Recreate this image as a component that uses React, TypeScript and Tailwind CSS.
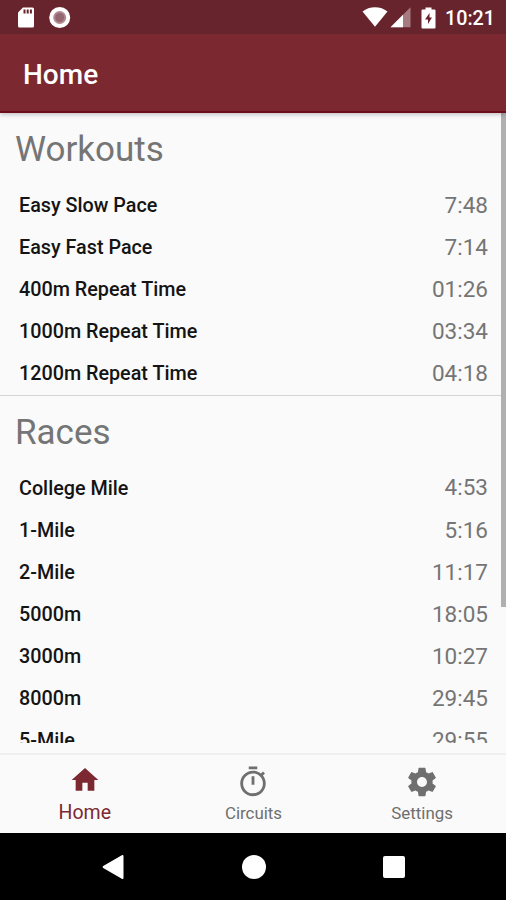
import React, { useState } from 'react';

const workouts = [
  { name: 'Easy Slow Pace', time: '7:48' },
  { name: 'Easy Fast Pace', time: '7:14' },
  { name: '400m Repeat Time', time: '01:26' },
  { name: '1000m Repeat Time', time: '03:34' },
  { name: '1200m Repeat Time', time: '04:18' },
];

const races = [
  { name: 'College Mile', time: '4:53' },
  { name: '1-Mile', time: '5:16' },
  { name: '2-Mile', time: '11:17' },
  { name: '5000m', time: '18:05' },
  { name: '3000m', time: '10:27' },
  { name: '8000m', time: '29:45' },
  { name: '5-Mile', time: '29:55' },
];

const tabs = [
  { name: 'Home', path: 'M10 20v-6h4v6h5v-8h3L12 3 2 12h3v8z' },
  {
    name: 'Circuits',
    path: 'M15 1H9v2h6V1zm-4 13h2V8h-2v6zm8.03-6.61l1.42-1.42c-.43-.51-.9-.99-1.41-1.41l-1.42 1.42C16.07 4.74 14.12 4 12 4c-4.97 0-9 4.03-9 9s4.02 9 9 9 9-4.03 9-9c0-2.12-.74-4.07-1.97-5.61zM12 20c-3.87 0-7-3.13-7-7s3.13-7 7-7 7 3.13 7 7-3.13 7-7 7z',
  },
  {
    name: 'Settings',
    path: 'M19.43 12.98c.04-.32.07-.64.07-.98s-.03-.66-.07-.98l2.11-1.65c.19-.15.24-.42.12-.64l-2-3.46c-.12-.22-.39-.3-.61-.22l-2.49 1c-.52-.4-1.08-.73-1.69-.98l-.38-2.65C14.46 2.18 14.25 2 14 2h-4c-.25 0-.46.18-.49.42l-.38 2.65c-.61.25-1.17.59-1.69.98l-2.49-1c-.23-.09-.49 0-.61.22l-2 3.46c-.13.22-.07.49.12.64l2.11 1.65c-.04.32-.07.65-.07.98s.03.66.07.98l-2.11 1.65c-.19.15-.24.42-.12.64l2 3.46c.12.22.39.3.61.22l2.49-1c.52.4 1.08.73 1.69.98l.38 2.65c.03.24.24.42.49.42h4c.25 0 .46-.18.49-.42l.38-2.65c.61-.25 1.17-.59 1.69-.98l2.49 1c.23.09.49 0 .61-.22l2-3.46c.12-.22.07-.49-.12-.64l-2.11-1.65zM12 15.5c-1.93 0-3.5-1.57-3.5-3.5s1.57-3.5 3.5-3.5 3.5 1.57 3.5 3.5-1.57 3.5-3.5 3.5z',
  },
];

const StatusBar = () => (
  <div className="h-[34px] shrink-0 bg-[#68242d] flex items-center justify-between pt-px pl-[17px] pr-[11px] text-white">
    <div className="flex items-center gap-[14px]">
      <svg width="18" height="22" viewBox="0 0 18 22">
        <path d="M6 .5h9.5A1.500 1.500 0 0 1 17 2v17a1.500 1.500 0 0 1-1.500 1.500h-13A1.500 1.500 0 0 1 1 19V5.500z" fill="#fff" />
        <path d="M6.500 2.500h2v4h-2zM9.700 2.500h2v4h-2zM12.900 2.500h2v4h-2z" fill="#68242d" />
      </svg>
      <svg width="22" height="22" viewBox="0 0 22 22">
        <circle cx="10.700" cy="10.500" r="10.500" fill="#fff" />
        <circle cx="10.700" cy="10.500" r="6.500" fill="#b08a90" />
        <circle cx="10.700" cy="10.500" r="4.500" fill="#946670" />
      </svg>
    </div>
    <div className="flex items-center">
      <svg width="26" height="21" viewBox="0 0 26 21">
        <path d="M13 19.700L.5 4.600C4 1.700 8.300.2 13 .2s9 1.500 12.500 4.400z" fill="#fff" />
      </svg>
      <svg className="ml-[2px]" width="21" height="21" viewBox="0 0 21 21">
        <path d="M20.500.2v20H.5z" fill="#a57a80" />
        <path d="M13 7.700v12.500H.5z" fill="#fff" />
      </svg>
      <svg className="ml-[10px]" width="15" height="22" viewBox="0 0 15 22">
        <path d="M4.500.5h6v2h3a1 1 0 0 1 1 1v17a1 1 0 0 1-1 1h-12a1 1 0 0 1-1-1v-17a1 1 0 0 1 1-1h3z" fill="#fff" />
        <path d="M8.500 6L4 12.500h3V17l4-6.500H8.500z" fill="#68242d" />
      </svg>
      <span className="ml-[9px] pt-[2px] text-[19.7px] font-medium leading-none">10:21</span>
    </div>
  </div>
);

const Section = ({ title, items }: { title: string; items: { name: string; time: string }[] }) => (
  <section>
    <h2 className="h-[71px] pt-[4px] pl-[15px] flex items-center text-[35px] text-[#757575]">{title}</h2>
    {items.map(item => (
      <div key={item.name} className="h-[42.17px] pt-px pl-[19px] pr-[18px] flex items-center justify-between">
        <span className="text-[19.75px] font-medium text-[#141414]">{item.name}</span>
        <span className="text-[22.5px] text-[#757575]">{item.time}</span>
      </div>
    ))}
  </section>
);

export default function App() {
  const [active, setActive] = useState('Home');

  return (
    <div className="w-[506px] h-[900px] flex flex-col overflow-hidden bg-[#fafafa] font-['Roboto',sans-serif]">
      <StatusBar />
      <header className="h-[79px] shrink-0 bg-[#7c2831] border-b-2 border-[#6d0f1a] pl-[23px] flex items-center text-white z-10 shadow-[0_2px_4px_rgba(0,0,0,0.2)]">
        <h1 className="text-[28px] font-medium pt-[5px]">{active}</h1>
      </header>

      <main className="relative h-[630px] shrink-0 overflow-hidden">
        <Section title="Workouts" items={workouts} />
        <div className="h-px bg-[#d4d4d4]" />
        <Section title="Races" items={races} />
        <div className="absolute top-0 right-0 w-[5px] h-[494px] bg-[#b0b0b0]" />
      </main>

      <nav className="mt-[10px] h-[80px] shrink-0 grid grid-cols-3 border-t-2 border-[#efefef]">
        {tabs.map(tab => (
          <button
            key={tab.name}
            onClick={() => setActive(tab.name)}
            className={`flex flex-col items-center pl-px ${active === tab.name ? 'pt-[8px] text-[#7c2831]' : 'pt-[10px] text-[#6f6f6f]'}`}
          >
            <svg className={active === tab.name ? 'w-8 h-[34px]' : 'w-[34px] h-[34px]'} viewBox="0 0 24 24" fill="currentColor">
              <path d={tab.path} />
            </svg>
            <span className={active === tab.name ? 'mt-[4px] text-[19.5px] leading-6' : 'mt-[2px] text-[16.9px] leading-6'}>{tab.name}</span>
          </button>
        ))}
      </nav>

      <div className="h-[67px] shrink-0 bg-black flex items-center justify-center gap-[117px]">
        <svg width="24" height="26" viewBox="0 0 24 26" fill="#fff">
          <path d="M2.200 12.100L20.800 1.200Q22.500.5 22.500 2.200v21.600q0 1.700-1.700 1L2.200 13.900q-1.400-.9 0-1.800z" />
        </svg>
        <div className="w-6 h-6 rounded-full bg-white" />
        <div className="w-[22px] h-[22px] rounded-[2px] bg-white" />
      </div>
    </div>
  );
}
